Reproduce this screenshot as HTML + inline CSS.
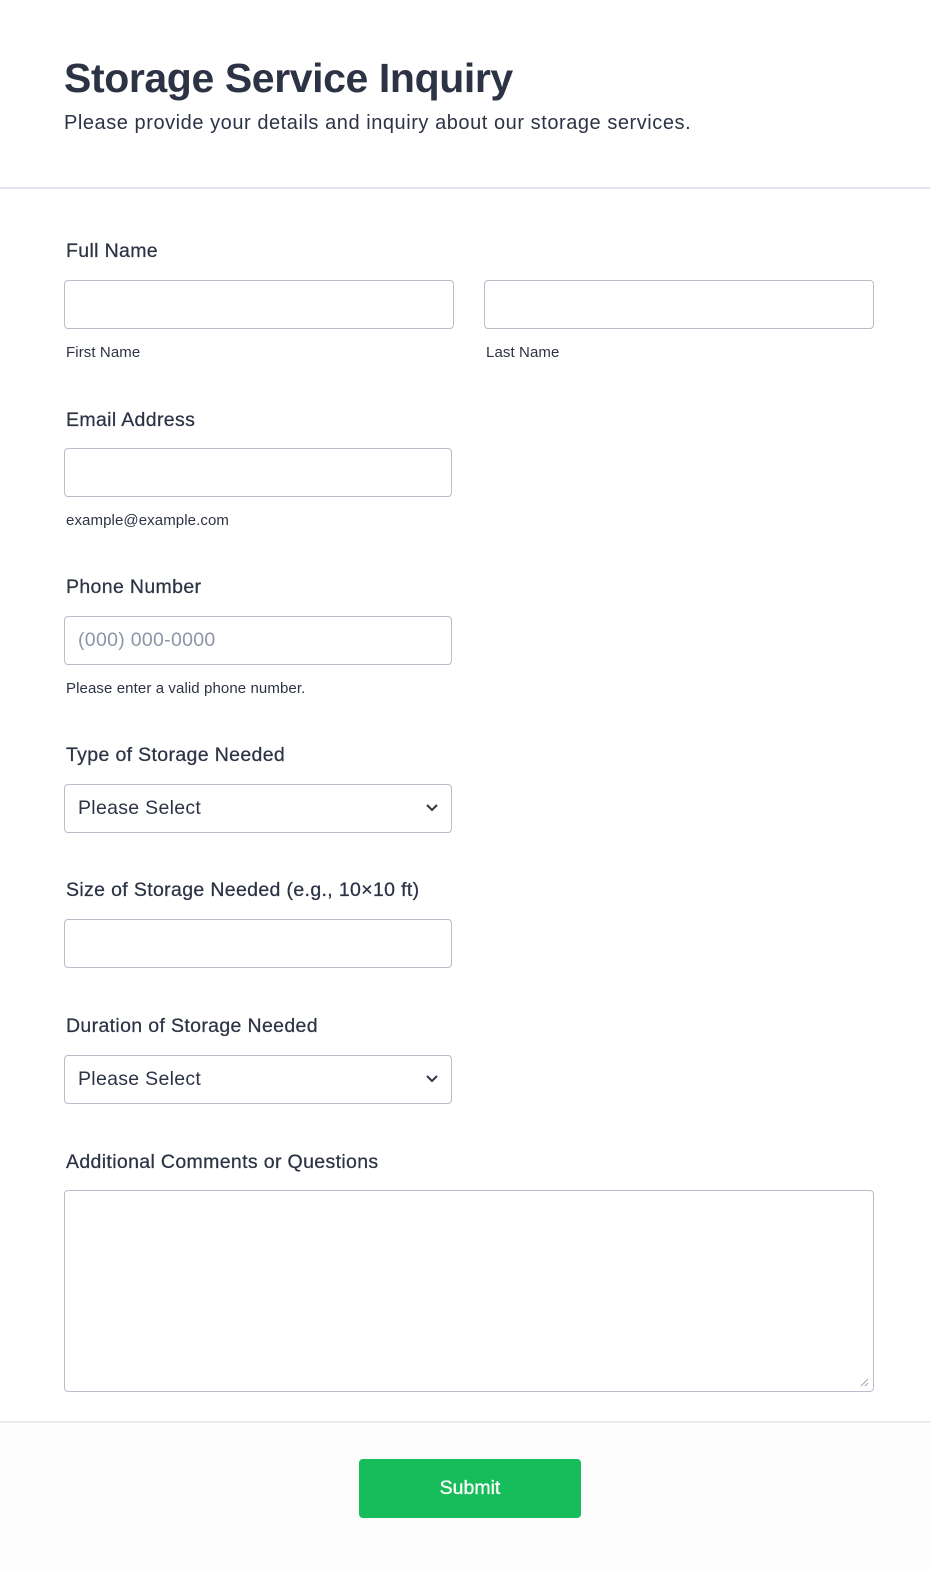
<!DOCTYPE html>
<html><head><style>
*{margin:0;padding:0;box-sizing:border-box}
body{width:930px;height:1572px;background:#fff;font-family:"Liberation Sans",sans-serif;color:#2c3345;position:relative;overflow:hidden}
.a{position:absolute}
h1{position:absolute;left:64px;top:55px;font-size:41px;font-weight:bold;letter-spacing:-0.4px;color:#2c3345}
.sub{left:64px;top:112px;font-size:20px;letter-spacing:0.55px}
.hr{left:0;width:930px;height:2px;background:#e3e5ec}
.lbl{left:66px;font-size:19.5px;letter-spacing:0.35px;color:#2c3345;-webkit-text-stroke:0.25px #2c3345}
.in{border:1px solid #b8bdc9;border-radius:4px;background:#fff;height:49px}
.hint{font-size:15px;color:#2c3345;letter-spacing:0.1px}
.sel{font-size:19.5px;padding-left:13px;line-height:47px;color:#2c3345;letter-spacing:0.3px}
.chev{position:absolute;right:12px;top:18px}
</style></head><body>
<h1>Storage Service Inquiry</h1>
<div class="a sub">Please provide your details and inquiry about our storage services.</div>
<div class="a hr" style="top:187px"></div>

<div class="a lbl" style="top:240px">Full Name</div>
<div class="a in" style="left:64px;top:280px;width:390px"></div>
<div class="a in" style="left:484px;top:280px;width:390px"></div>
<div class="a hint" style="left:66px;top:344px">First Name</div>
<div class="a hint" style="left:486px;top:344px">Last Name</div>

<div class="a lbl" style="top:409px">Email Address</div>
<div class="a in" style="left:64px;top:448px;width:388px"></div>
<div class="a hint" style="left:66px;top:512px">example@example.com</div>

<div class="a lbl" style="top:576px">Phone Number</div>
<div class="a in sel" style="left:64px;top:616px;width:388px;color:#8d94a5">(000) 000-0000</div>
<div class="a hint" style="left:66px;top:680px">Please enter a valid phone number.</div>

<div class="a lbl" style="top:744px">Type of Storage Needed</div>
<div class="a in sel" style="left:64px;top:784px;width:388px">Please Select<svg class="chev" width="14" height="10" viewBox="0 0 14 10"><path d="M2 2l5 5 5-5" stroke="#2c3345" stroke-width="2" fill="none"/></svg></div>

<div class="a lbl" style="top:879px">Size of Storage Needed (e.g., 10×10 ft)</div>
<div class="a in" style="left:64px;top:919px;width:388px"></div>

<div class="a lbl" style="top:1015px">Duration of Storage Needed</div>
<div class="a in sel" style="left:64px;top:1055px;width:388px">Please Select<svg class="chev" width="14" height="10" viewBox="0 0 14 10"><path d="M2 2l5 5 5-5" stroke="#2c3345" stroke-width="2" fill="none"/></svg></div>

<div class="a lbl" style="top:1151px">Additional Comments or Questions</div>
<div class="a in" style="left:64px;top:1190px;width:810px;height:202px"><svg style="position:absolute;right:4px;bottom:4px" width="9" height="9"><path d="M1 8L8 1M5 8L8 5" stroke="#a0a6b5"/></svg></div>

<div class="a hr" style="top:1421px;background:#e8ebf0"></div>
<div class="a" style="left:0;top:1423px;width:930px;height:149px;background:#fdfdfd"></div>
<div class="a" style="left:359px;top:1459px;width:222px;height:59px;background:#18bd5b;border-radius:4px;color:#fff;font-size:19.5px;text-align:center;line-height:59px;-webkit-text-stroke:0.3px #fff">Submit</div>
</body></html>
